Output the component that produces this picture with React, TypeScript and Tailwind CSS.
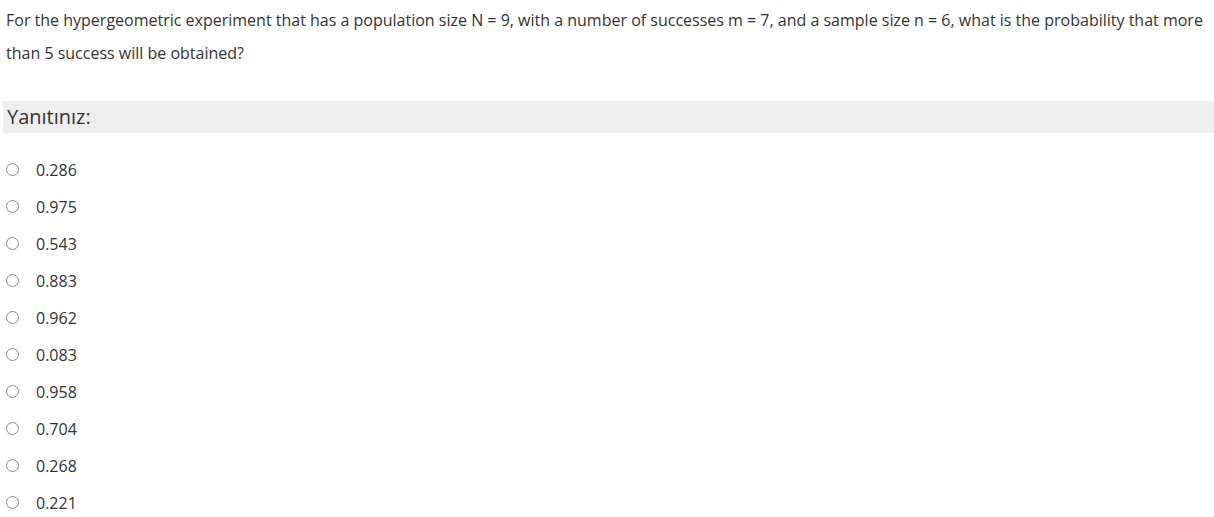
import React from "react";

const options = ["0.286", "0.975", "0.543", "0.883", "0.962", "0.083", "0.958", "0.704", "0.268", "0.221"];

export default function App() {
  return (
    <div className="w-[1214px] h-[517px] bg-white text-[#333333] overflow-hidden" style={{ fontFamily: '"Open Sans", sans-serif' }}>
      <div className="pl-[6px] pr-[6px] pt-[4px] text-[16px] leading-[33px]">
        For the hypergeometric experiment that has a population size N = 9, with a number of successes m = 7, and a sample size n = 6, what is the probability that more than 5 success will be obtained?
      </div>
      <div className="mt-[31px] ml-[3px] h-[32px] bg-[#eeeeee] pl-[4px] text-[20px] leading-[32px] text-[#333333]">
        Yanıtınız:
      </div>
      <div className="mt-[18px] flex flex-col">
        {options.map((o) => (
          <label key={o} className="flex items-center h-[37px] pl-[6px]">
            <span className="w-[13px] h-[13px] rounded-full border border-[#8a8a8a] bg-white" />
            <span className="ml-[17px] text-[16px] text-[#333333]">{o}</span>
          </label>
        ))}
      </div>
    </div>
  );
}
